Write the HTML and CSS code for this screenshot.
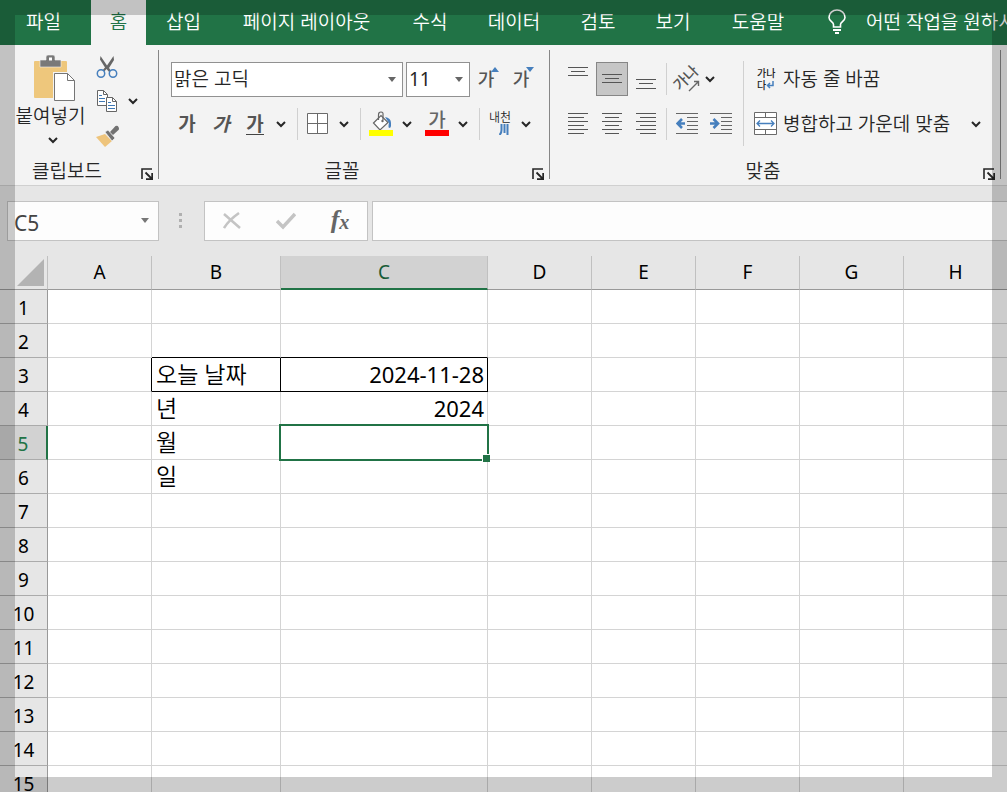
FILE: index.html
```html
<!DOCTYPE html>
<html lang="ko">
<head>
<meta charset="utf-8">
<title>스프레드시트</title>
<link rel="stylesheet" href="styles.css">
</head>
<body>
<svg class="defs" aria-hidden="true">
  <symbol id="chev" viewBox="0 0 12 8"><path d="M2 2l4 4 4-4" fill="none" stroke="#262626" stroke-width="2"/></symbol>
  <symbol id="launch" viewBox="0 0 12 12"><path d="M1 11V1h10" fill="none" stroke="#262626" stroke-width="1.6"/><path d="M4.500 4.500l6 6M11.200 5v6.200H5" fill="none" stroke="#262626" stroke-width="1.8"/></symbol>
</svg>
<div class="app">
  <nav class="tabs">
    <button class="tab tab-file">파일</button>
    <button class="tab tab-active">홈</button>
    <button class="tab">삽입</button>
    <button class="tab">페이지 레이아웃</button>
    <button class="tab">수식</button>
    <button class="tab">데이터</button>
    <button class="tab">검토</button>
    <button class="tab">보기</button>
    <button class="tab">도움말</button>
    <button class="tab tab-tell">
      <svg width="18" height="26" viewBox="0 0 18 26"><path d="M5.500 18v-2.500C5.500 13 1 12 1 8.500a8 7.500 0 0 1 16 0c0 3.500-4.500 4.500-4.500 7V18z" fill="none" stroke="#fff" stroke-width="1.600"/><path d="M5 21h8M7 24h4" stroke="#fff" stroke-width="2"/></svg>
      <span>어떤 작업을 원하시나요?</span>
    </button>
  </nav>

  <div class="ribbon">
    <section class="group group-clip">
      <div class="group-body clip-body">
        <button class="paste">
          <svg class="paste-icon" width="42" height="47" viewBox="0 0 42 47"><rect y="6" width="33" height="37" rx="1" fill="#eec77c"/><path d="M6 5h6V2q0-2 2-2h5q2 0 2 2v3h6v7H6z" fill="#797979" stroke="#f3f3f3" stroke-width=".6"/><rect x="15" y="2.500" width="3" height="3" fill="#fff"/><path d="M19 17h15l8 8v22H19z" fill="#f3f3f3"/><path d="M20.500 18.500h13l7 7v20h-20z" fill="#fff" stroke="#757575"/><path d="M33.500 18.500v7h7" fill="none" stroke="#757575"/></svg>
          <span>붙여넣기</span>
          <svg class="paste-chev" width="12" height="8"><use href="#chev"/></svg>
        </button>
        <div class="clip-tools">
          <button class="tool" aria-label="잘라내기"><svg width="22" height="24" viewBox="0 0 22 24"><path d="M4.500 1L11 10.500 17.500 1l.5 4-5 8 3 4-2 1-3.500-4L7 18l-2-1 4-4.500-5-8z" fill="#666"/><circle cx="5" cy="18.500" r="3.700" fill="#f3f3f3" stroke="#467fbd" stroke-width="1.500"/><circle cx="17" cy="18.500" r="3.700" fill="#f3f3f3" stroke="#467fbd" stroke-width="1.500"/></svg></button><span></span>
          <button class="tool" aria-label="복사"><svg width="22" height="24" viewBox="0 0 22 24"><path d="M1.500 1.500h6l4 4v11h-10z" fill="#fff" stroke="#666"/><path d="M7.500 1.500v4h4" fill="none" stroke="#666"/><path d="M3 6.500h3M3 9.500h6M3 12.500h6" stroke="#3f79b6"/><path d="M10.500 8.500h6l4 4v10h-10z" fill="#fff" stroke="#666"/><path d="M16.500 8.500v4h4" fill="none" stroke="#666"/><path d="M12 13.500h3M12 16.500h7M12 19.500h7" stroke="#3f79b6"/></svg></button><button class="chev" aria-label="복사 옵션"><svg width="12" height="8"><use href="#chev"/></svg></button>
          <button class="tool" aria-label="서식 복사"><svg width="24" height="22" viewBox="0 0 24 22"><path d="M1 12l9-3 7 7-7 6z" fill="#eec47c"/><path d="M10 7l3-2 7 8-3 3z" fill="#727272" stroke="#f3f3f3" stroke-width=".7"/><path d="M15 7l5.500-6q2-1 3 1t0 3L18 10z" fill="#727272"/></svg></button><span></span>
        </div>
      </div>
      <div class="group-foot"><span>클립보드</span><button class="launch" aria-label="클립보드 옵션"><svg width="12" height="12"><use href="#launch"/></svg></button></div>
    </section>

    <section class="group group-font">
      <div class="group-body">
        <div class="row row-top">
          <div class="combo combo-font"><select aria-label="글꼴"><option>맑은 고딕</option></select></div>
          <div class="combo combo-size"><select aria-label="글꼴 크기"><option>11</option></select></div>
          <button class="tool size-tool" aria-label="글꼴 크기 크게"><span>가</span><svg width="8" height="5"><path d="M0 5l4-5 4 5z" fill="#467fbd"/></svg></button>
          <button class="tool size-tool" aria-label="글꼴 크기 작게"><span>가</span><svg width="8" height="5"><path d="M0 0h8l-4 5z" fill="#467fbd"/></svg></button>
        </div>
        <div class="row">
          <button class="tool glyph">가</button>
          <button class="tool glyph italic">가</button>
          <button class="tool glyph"><span class="underlined">가</span></button>
          <button class="chev chev-gap" aria-label="밑줄 옵션"><svg width="12" height="8"><use href="#chev"/></svg></button>
          <i class="sep"></i>
          <button class="tool wide" aria-label="테두리"><svg width="22" height="22" viewBox="0 0 22 22"><path d="M.5.5h20v20H.5zM10.500.5v20M.5 10.500h20" fill="#fff" stroke="#6a6a6a"/></svg></button>
          <button class="chev" aria-label="테두리 옵션"><svg width="12" height="8"><use href="#chev"/></svg></button>
          <i class="sep"></i>
          <button class="tool wide" aria-label="채우기 색"><svg width="24" height="26" viewBox="0 0 24 26"><path d="M4.500 12L12 4.500l7 7-8 7.500z" fill="#fff" stroke="#666" stroke-width="1.200"/><path d="M9.500 9V4q0-3 2.500-3t2 3v5" fill="none" stroke="#666" stroke-width="1.200"/><circle cx="13.500" cy="10" r="1.200" fill="#666"/><path d="M16 6q6 1 6 6v3q0 2-2 2-1-1 0-5z" fill="#467fbd"/><path d="M0 19h24v6H0z" fill="#ff0"/></svg></button>
          <button class="chev" aria-label="채우기 색 옵션"><svg width="12" height="8"><use href="#chev"/></svg></button>
          <button class="tool font-color" aria-label="글꼴 색"><span>가</span></button>
          <button class="chev" aria-label="글꼴 색 옵션"><svg width="12" height="8"><use href="#chev"/></svg></button>
          <i class="sep"></i>
          <button class="tool wide ruby" aria-label="윗주"><span>내천</span><svg width="10" height="11" viewBox="0 0 10 11"><path d="M2.500 0v6q0 3-2 5M5.500 0v9M8.500 0v11" fill="none" stroke="#467fbd" stroke-width="2"/></svg></button>
          <button class="chev" aria-label="윗주 옵션"><svg width="12" height="8"><use href="#chev"/></svg></button>
        </div>
      </div>
      <div class="group-foot"><span>글꼴</span><button class="launch" aria-label="글꼴 옵션"><svg width="12" height="12"><use href="#launch"/></svg></button></div>
    </section>

    <section class="group group-align">
      <div class="group-body align-body">
        <div class="align-left">
          <div class="row row-top">
            <button class="tool" aria-label="위쪽 맞춤"><svg width="20" height="32" viewBox="0 0 20 32"><path d="M0 4.500h20M3 8.500h14M0 12.500h20" stroke="#555"/></svg></button>
            <button class="tool pressed" aria-label="가운데 맞춤"><svg width="20" height="32" viewBox="0 0 20 32"><path d="M0 11.500h20M3 15.500h14M0 19.500h20" stroke="#555"/></svg></button>
            <button class="tool" aria-label="아래쪽 맞춤"><svg width="20" height="32" viewBox="0 0 20 32"><path d="M0 16.500h20M3 20.500h14M0 25.500h20" stroke="#555"/></svg></button>
            <i class="sep sep-tight"></i>
            <button class="tool" aria-label="방향"><span class="tilted">가나</span><svg class="tilt-arrow" width="12" height="12" viewBox="0 0 12 12"><path d="M1 11L10.500 1.500M6 1.500h4.500V6" fill="none" stroke="#666" stroke-width="1.400"/></svg></button>
            <button class="chev" aria-label="방향 옵션"><svg width="12" height="8"><use href="#chev"/></svg></button>
          </div>
          <div class="row">
            <button class="tool" aria-label="왼쪽 맞춤"><svg width="20" height="22" viewBox="0 0 20 22"><path d="M0 .5h20M0 4.500h16M0 8.500h20M0 12.500h16M0 16.500h20M0 20.500h16" stroke="#555"/></svg></button>
            <button class="tool" aria-label="가로 가운데 맞춤"><svg width="20" height="22" viewBox="0 0 20 22"><path d="M0 .5h20M3 4.500h14M0 8.500h20M3 12.500h14M0 16.500h20M3 20.500h14" stroke="#555"/></svg></button>
            <button class="tool" aria-label="오른쪽 맞춤"><svg width="20" height="22" viewBox="0 0 20 22"><path d="M0 .5h20M4 4.500h16M0 8.500h20M4 12.500h16M0 16.500h20M4 20.500h16" stroke="#555"/></svg></button>
            <i class="sep sep-tight"></i>
            <button class="tool" aria-label="내어쓰기"><svg width="22" height="22" viewBox="0 0 22 22"><path d="M0 .5h22M11 4.500h11M11 8.500h11M11 12.500h11M11 16.500h11M0 20.500h22" stroke="#666"/><path d="M9 10.500H2M6 6l-4.500 4.500L6 15" fill="none" stroke="#467fbd" stroke-width="2.600"/></svg></button>
            <button class="tool" aria-label="들여쓰기"><svg width="22" height="22" viewBox="0 0 22 22"><path d="M0 .5h22M11 4.500h11M11 8.500h11M11 12.500h11M11 16.500h11M0 20.500h22" stroke="#666"/><path d="M0 10.500h7M3.500 6L8 10.500 3.500 15" fill="none" stroke="#467fbd" stroke-width="2.600"/></svg></button>
          </div>
        </div>
        <div class="align-right">
          <button class="wide-tool wide-tool-top"><span class="wrap-icon"><span>가나</span><span>다<svg width="8" height="8" viewBox="0 0 8 8"><path d="M7 0v4.500H1.500M4 2L1.500 4.500 4 7" fill="none" stroke="#467fbd" stroke-width="1.500"/></svg></span></span><span>자동 줄 바꿈</span></button>
          <div class="merge">
            <button class="wide-tool"><svg width="24" height="24" viewBox="0 0 24 24"><path d="M.5.5h22v22H.5z" fill="#fff" stroke="#6a6a6a"/><path d="M.5 5.500h22M.5 17.500h22M11.500.5v5M11.500 17.500v5" stroke="#6a6a6a"/><path d="M3 11.500h17M6 8.500l-3 3 3 3M17 8.500l3 3-3 3" fill="none" stroke="#467fbd" stroke-width="1.300"/></svg><span>병합하고 가운데 맞춤</span></button>
            <button class="chev" aria-label="병합 옵션"><svg width="12" height="8"><use href="#chev"/></svg></button>
          </div>
        </div>
      </div>
      <div class="group-foot"><span>맞춤</span><button class="launch" aria-label="맞춤 옵션"><svg width="12" height="12"><use href="#launch"/></svg></button></div>
    </section>
  </div>

  <div class="formula-bar">
    <div class="combo combo-name"><select aria-label="이름 상자"><option>C5</option></select></div>
    <div class="dots"><i></i><i></i><i></i></div>
    <div class="fx-box">
      <button aria-label="취소"><svg width="18" height="18" viewBox="0 0 18 18"><path d="M1 2l16 14M16 1Q6 8 1 16" fill="none" stroke="#c4c4c4" stroke-width="2.500"/></svg></button>
      <button aria-label="입력"><svg width="20" height="18" viewBox="0 0 20 18"><path d="M1 9l6 6L19 2" fill="none" stroke="#c4c4c4" stroke-width="3.500"/></svg></button>
      <button class="fx" aria-label="함수 삽입">f<span>x</span></button>
    </div>
    <input class="formula" type="text" aria-label="수식 입력줄">
  </div>

  <div class="sheet">
    <table>
      <colgroup><col class="c-head"><col class="c"><col class="c-b"><col class="c-c"><col class="c"><col class="c"><col class="c"><col class="c"><col class="c"></colgroup>
      <thead><tr><th class="corner"><svg width="27" height="27"><path d="M27 0v27H0z" fill="#b3b3b3"/></svg></th><th>A</th><th>B</th><th class="col-on">C</th><th>D</th><th>E</th><th>F</th><th>G</th><th>H</th></tr></thead>
      <tbody>
        <tr><th>1</th><td></td><td></td><td></td><td></td><td></td><td></td><td></td><td></td></tr>
        <tr><th>2</th><td></td><td class="line-b"></td><td class="line-b"></td><td></td><td></td><td></td><td></td><td></td></tr>
        <tr><th>3</th><td class="line-r"></td><td class="line-r line-b">오늘 날짜</td><td class="num line-r line-b">2024-11-28</td><td></td><td></td><td></td><td></td><td></td></tr>
        <tr><th>4</th><td></td><td>년</td><td class="num">2024</td><td></td><td></td><td></td><td></td><td></td></tr>
        <tr><th class="row-on">5</th><td></td><td>월</td><td class="selected"></td><td></td><td></td><td></td><td></td><td></td></tr>
        <tr><th>6</th><td></td><td>일</td><td></td><td></td><td></td><td></td><td></td><td></td></tr>
        <tr><th>7</th><td></td><td></td><td></td><td></td><td></td><td></td><td></td><td></td></tr>
        <tr><th>8</th><td></td><td></td><td></td><td></td><td></td><td></td><td></td><td></td></tr>
        <tr><th>9</th><td></td><td></td><td></td><td></td><td></td><td></td><td></td><td></td></tr>
        <tr><th>10</th><td></td><td></td><td></td><td></td><td></td><td></td><td></td><td></td></tr>
        <tr><th>11</th><td></td><td></td><td></td><td></td><td></td><td></td><td></td><td></td></tr>
        <tr><th>12</th><td></td><td></td><td></td><td></td><td></td><td></td><td></td><td></td></tr>
        <tr><th>13</th><td></td><td></td><td></td><td></td><td></td><td></td><td></td><td></td></tr>
        <tr><th>14</th><td></td><td></td><td></td><td></td><td></td><td></td><td></td><td></td></tr>
        <tr><th>15</th><td></td><td></td><td></td><td></td><td></td><td></td><td></td><td></td></tr>
      </tbody>
    </table>
  </div>
</div>
<div class="frame"></div>
</body>
</html>
```

FILE: styles.css
```css
* { box-sizing: border-box; }
body {
  margin: 0;
  overflow: hidden;
  background: #fff;
  color: #262626;
  font: 350 19px/24px "Noto Sans", "Noto Sans CJK KR", sans-serif;
}
button, select, input { font: inherit; color: inherit; }
button {
  display: flex;
  align-items: center;
  justify-content: center;
  flex: none;
  margin: 0;
  padding: 0;
  border: 0;
  background: none;
  white-space: nowrap;
}
svg { display: block; flex: none; }
.defs { position: absolute; width: 0; height: 0; }
.app { display: flex; flex-direction: column; height: 100vh; overflow: hidden; }
.frame {
  position: fixed;
  inset: 0;
  border: 15px solid rgba(0, 0, 0, 0.2);
  pointer-events: none;
  z-index: 5;
}

/* Tabs */
.tabs {
  flex: none;
  display: grid;
  grid-template-columns: 91px 55px 75px 171px 76px 92px 76px 74px 96px 1fr;
  height: 45px;
  background: #217346;
  color: #fff;
  overflow: hidden;
}
.tab { min-width: 0; padding-bottom: 2px; }
.tab-file { padding-right: 4px; }
.tab-active { background: #f3f3f3; color: #217346; }
.tab-tell { justify-content: flex-start; gap: 20px; padding-left: 22px; overflow: hidden; }

/* Ribbon */
.ribbon {
  flex: none;
  display: flex;
  height: 141px;
  padding: 5px 0;
  background: #f3f3f3;
  border-bottom: 1px solid #d0d0d0;
  overflow: hidden;
}
.group {
  flex: none;
  display: flex;
  flex-direction: column;
  height: 129px;
  border-right: 1px solid #868686;
}
.group-clip { width: 159px; }
.group-font { width: 391px; }
.group-align { width: 451px; }
.group-body { flex: 1; padding: 11px 0 0 11px; }
.group-foot {
  display: grid;
  grid-template-columns: 1fr 24px;
  height: 24px;
  text-align: center;
  line-height: 32px;
}
.launch { justify-content: flex-start; padding: 5px 0 0 7px; }
.row { display: flex; align-items: center; height: 32px; }
.row-top { height: 36px; margin-bottom: 11px; }
.tool { position: relative; width: 34px; height: 32px; }
.wide { width: 40px; }
.chev { width: 12px; height: 32px; }
.chev-gap { margin-left: 3px; }
.sep { flex: none; width: 1px; height: 32px; margin-left: 10px; background: #d0d0d0; }
.sep-tight { margin: 0 3px; }

.clip-body { display: flex; padding: 5px 0 0 15px; }
.paste { width: 71px; flex-direction: column; justify-content: flex-start; align-self: flex-start; }
.paste span { line-height: 28px; margin-bottom: 6px; }
.paste-icon { margin-left: 8px; }
.paste-chev { margin-left: 4px; }
.clip-tools {
  display: grid;
  grid-template-columns: 41px 12px;
  grid-template-rows: 24px 44px 26px;
  align-items: center;
  align-self: flex-start;
}
.clip-tools .tool { width: 41px; height: 24px; }

.combo { position: relative; flex: none; }
.combo::after {
  content: "";
  position: absolute;
  right: 7px;
  top: 15px;
  border: 4px solid transparent;
  border-top: 5px solid #666;
  border-bottom: 0;
  pointer-events: none;
}
.combo select {
  display: block;
  width: 100%;
  height: 35px;
  padding: 0 2px;
  border: 1px solid #919191;
  border-radius: 0;
  background: #fff;
  appearance: none;
}
.combo-font { width: 232px; margin: 0 3px 0 1px; }
.combo-size { width: 64px; }
.combo-size select { font-weight: 400; }
.size-tool { width: 35px; padding-right: 3px; font-size: 18px; font-weight: 500; color: #555; }
.size-tool svg { position: absolute; right: 6px; top: 4px; }
.glyph { font-size: 19px; font-weight: 700; color: #555; }
.italic { font-style: italic; }
.underlined { line-height: 20px; border-bottom: 1px solid #444; }
.font-color { width: 44px; padding-left: 4px; }
.font-color span {
  width: 24px;
  height: 24px;
  line-height: 16px;
  border-bottom: 6px solid #f00;
  font-weight: 500;
  color: #666;
}
.ruby { flex-direction: column; font-size: 12px; line-height: 12px; padding-bottom: 2px; }
.ruby svg { margin-left: 8px; }

.align-body { display: flex; }
.align-left { width: 182px; }
.pressed { height: 34px; width: 32px; margin: 0 1px; background: #c6c6c6; border: 1px solid #868686; }
.tilted { font-size: 15px; line-height: 16px; font-weight: 500; color: #555; transform: rotate(-45deg) translateY(-2px); }
.tilt-arrow { position: absolute; right: 4px; bottom: 3px; }
.align-right { flex: 1; height: 85px; border-left: 1px solid #d0d0d0; }
.wide-tool { height: 32px; padding-left: 10px; gap: 5px; }
.wide-tool-top { height: 36px; margin-bottom: 11px; }
.wrap-icon { width: 24px; font-size: 10px; line-height: 12px; font-weight: 500; text-align: left; padding-left: 3px; }
.wrap-icon > span { display: flex; align-items: center; height: 12px; }
.merge { display: flex; justify-content: space-between; padding-right: 18px; }

/* Formula bar */
.formula-bar { flex: none; display: flex; height: 70px; padding: 15px 0 14px 7px; background: #e6e6e6; }
.combo-name { width: 152px; }
.combo-name::after { right: 10px; top: 17px; border-top-color: #777; }
.combo-name select {
  height: 40px;
  padding: 4px 6px 0;
  border-color: #c3c3c3;
  background: #fdfdfd;
  font-size: 21px;
  font-weight: 400;
  color: #444;
}
.dots { width: 45px; display: flex; flex-direction: column; align-items: center; gap: 3px; padding: 12px 2px 0 0; }
.dots i { width: 3px; height: 3px; background: #b0b0b0; }
.fx-box { display: flex; width: 164px; height: 40px; margin-right: 4px; border: 1px solid #c3c3c3; background: #fdfdfd; }
.fx-box button { flex: 1; }
.fx-box .fx { font: italic bold 26px "Liberation Serif", serif; color: #666; padding-bottom: 2px; }
.fx span { font-size: 20px; padding-top: 5px; }
.formula { flex: 1; min-width: 0; height: 40px; border: 1px solid #c3c3c3; border-right: 0; border-radius: 0; background: #fdfdfd; }

/* Sheet */
.sheet { flex: 1; overflow: hidden; background: #fff; }
table { width: 1008px; table-layout: fixed; border-collapse: separate; border-spacing: 0; color: #000; }
.c-head { width: 48px; }
.c { width: 104px; }
.c-b { width: 129px; }
.c-c { width: 207px; }
th, td { height: 34px; padding: 0; border: 0 solid #d4d4d4; border-width: 0 1px 1px 0; white-space: nowrap; line-height: 28px; }
th { background: #e6e6e6; font-weight: 400; }
thead th { padding-bottom: 1px; border-right-color: #c0c0c0; border-bottom-color: #999; }
tbody th { padding-top: 2px; border-right-color: #999; border-bottom-color: #ababab; }
thead .corner { padding: 3px 3px 0 0; vertical-align: top; }
.corner svg { margin-left: auto; }
.col-on { background: #d2d2d2; color: #185c37; border-bottom: 2px solid #217346; }
thead .col-on { border-bottom-color: #217346; }
tbody .row-on { background: #d2d2d2; color: #217346; border-right: 2px solid #217346; }
td { padding: 0 0 2px 4px; font-size: 23px; }
.num { padding: 0 3px 2px 0; font-size: 22px; font-weight: 400; text-align: right; }
.line-b { border-bottom-color: #000; }
.line-r { border-right-color: #000; }
.selected { position: relative; }
.selected::before { content: ""; position: absolute; inset: -2px; border: 2px solid #217346; }
.selected::after {
  content: "";
  position: absolute;
  right: -3px;
  bottom: -3px;
  width: 7px;
  height: 7px;
  background: #217346;
  border: solid #fff;
  border-width: 1px 0 0 1px;
}
```
